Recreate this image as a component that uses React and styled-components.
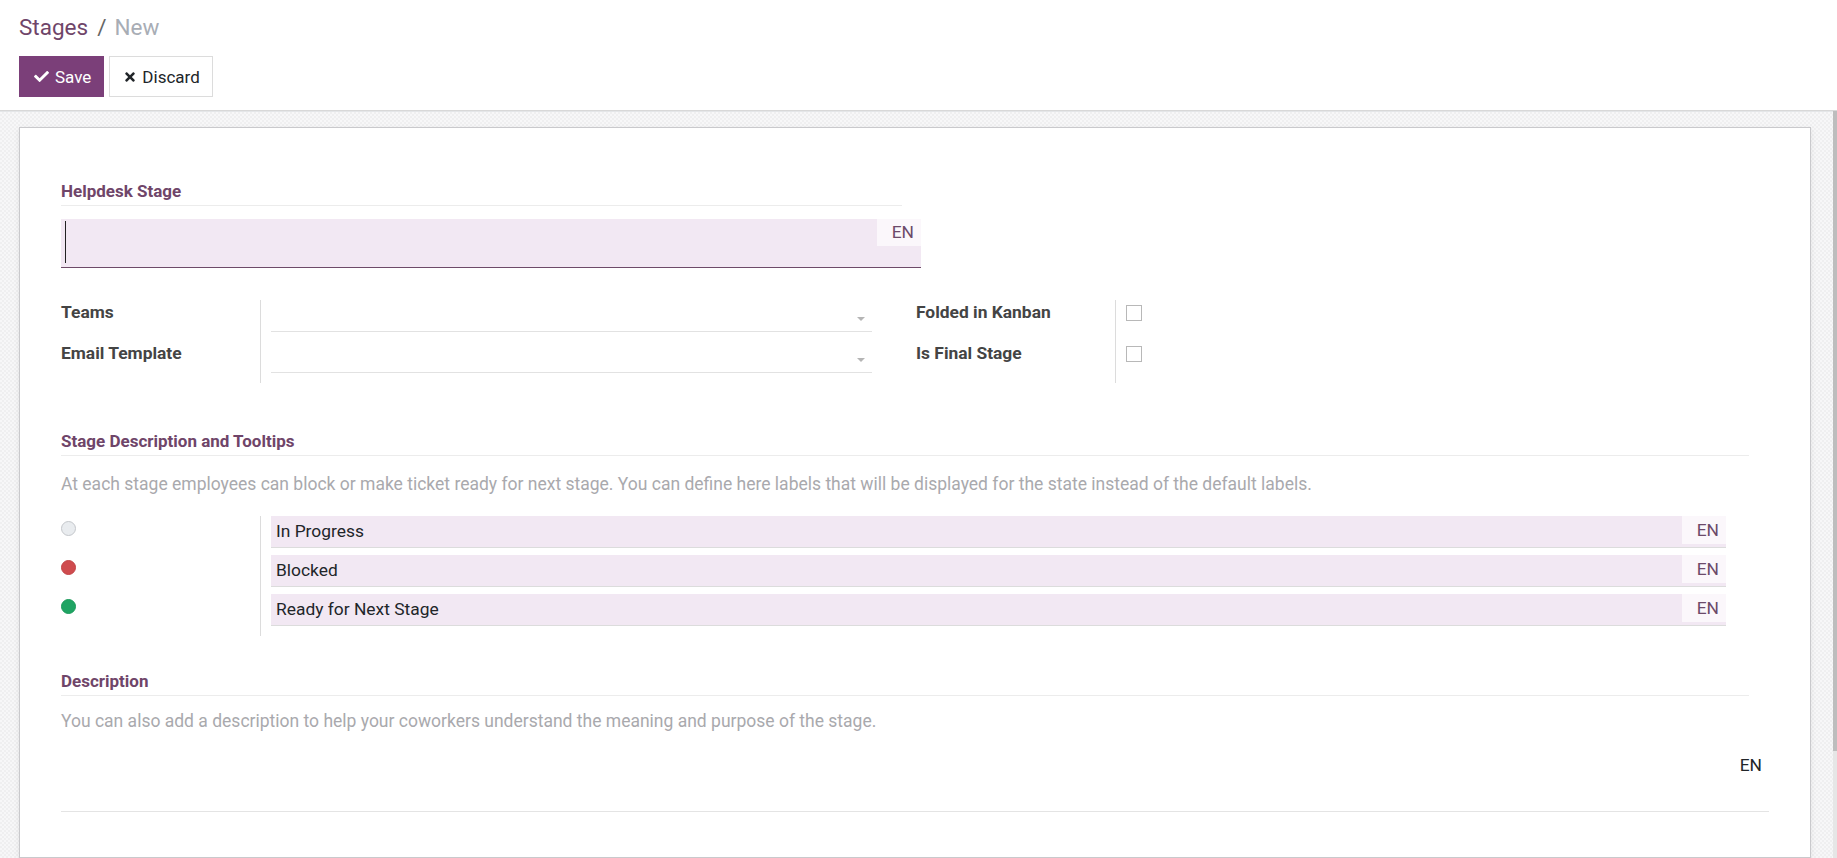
import styled, { createGlobalStyle } from "styled-components"
import { FaCheck, FaTimes } from "react-icons/fa"

const legend = [
  { color: "#e9ecef", border: "#c4c7cb", label: "In Progress" },
  { color: "#cf4b4e", border: "#c24346", label: "Blocked" },
  { color: "#1fa463", border: "#1a9a5a", label: "Ready for Next Stage" },
]

export default function App() {
  return (
    <>
      <GlobalStyle />
      <ControlPanel>
        <Breadcrumb>
          <Crumb>Stages</Crumb>
          <Slash>/</Slash>
          <Current>New</Current>
        </Breadcrumb>
        <Buttons>
          <PrimaryButton>
            <FaCheck size={15} />
            Save
          </PrimaryButton>
          <SecondaryButton>
            <FaTimes size={14} />
            Discard
          </SecondaryButton>
        </Buttons>
      </ControlPanel>
      <Content>
        <Sheet>
          <TitleBlock>
            <SectionLabel width="841px">Helpdesk Stage</SectionLabel>
            <NameInput>
              <Caret />
              <LangTag>EN</LangTag>
            </NameInput>
          </TitleBlock>

          <Group>
            <InnerGroup columns="199px 612px" width="855px">
              <FieldLabel>Teams</FieldLabel>
              <FieldCell>
                <Many2One>
                  <DropCaret />
                </Many2One>
              </FieldCell>
              <FieldLabel>Email Template</FieldLabel>
              <FieldCell last>
                <Many2One>
                  <DropCaret />
                </Many2One>
              </FieldCell>
            </InnerGroup>
            <InnerGroup columns="199px 200px">
              <FieldLabel>Folded in Kanban</FieldLabel>
              <FieldCell>
                <CheckRow>
                  <Checkbox />
                </CheckRow>
              </FieldCell>
              <FieldLabel>Is Final Stage</FieldLabel>
              <FieldCell last>
                <CheckRow>
                  <Checkbox />
                </CheckRow>
              </FieldCell>
            </InnerGroup>
          </Group>

          <SectionLabel width="1688px" top="47px">
            Stage Description and Tooltips
          </SectionLabel>
          <Help>
            At each stage employees can block or make ticket ready for next stage. You can define here labels that will
            be displayed for the state instead of the default labels.
          </Help>
          <LegendGroup>
            {legend.map((item, index) => (
              <LegendRow key={item.label}>
                <LegendCell>
                  <Dot color={item.color} border={item.border} />
                </LegendCell>
                <FieldCell last={index === legend.length - 1} tight>
                  <StateInput>
                    <StateText>{item.label}</StateText>
                    <LangTag small>EN</LangTag>
                  </StateInput>
                </FieldCell>
              </LegendRow>
            ))}
          </LegendGroup>

          <SectionLabel width="1688px" top="34px">
            Description
          </SectionLabel>
          <Help top="14px">
            You can also add a description to help your coworkers understand the meaning and purpose of the stage.
          </Help>
          <Editor>
            <EditorLang>EN</EditorLang>
          </Editor>
        </Sheet>
        <ScrollTrack>
          <ScrollThumb />
        </ScrollTrack>
      </Content>
    </>
  )
}

const GlobalStyle = createGlobalStyle`
  html, body {
    margin: 0;
    padding: 0;
  }
  body {
    font-family: Roboto, "Noto Sans", sans-serif;
    font-size: 17.4px;
    line-height: 1.5;
    color: #4c4c4c;
    background: #fff;
    overflow: hidden;
    height: 858px;
  }
`
const ControlPanel = styled.div`
  padding: 13px 19px 13px;
  border-bottom: 1px solid #d8d8d8;
  background: #fff;
`
const Breadcrumb = styled.div`
  display: flex;
  align-items: center;
  height: 28px;
  font-size: 22.5px;
  line-height: 28px;
`
const Crumb = styled.span`
  color: #6f4569;
`
const Slash = styled.span`
  color: #666;
  margin: 0 8px 0 9px;
`
const Current = styled.span`
  color: #a8adb5;
`
const Buttons = styled.div`
  display: flex;
  gap: 5px;
  margin-top: 15px;
`
const Button = styled.button`
  display: flex;
  align-items: center;
  height: 41px;
  font-family: Roboto, sans-serif;
  font-size: 17px;
  border-radius: 0;
  cursor: pointer;
`
const PrimaryButton = styled(Button)`
  gap: 6px;
  padding: 0 12px 0 14px;
  background: #7b3f79;
  border: 1px solid #7b3f79;
  color: #fff;
`
const SecondaryButton = styled(Button)`
  gap: 5px;
  padding: 0 12px 0 13px;
  background: #fff;
  border: 1px solid #dcdcdc;
  color: #212529;
`
const Content = styled.div`
  display: flex;
  align-items: flex-start;
  height: 747px;
  padding: 15px 0 0 19px;
  box-sizing: border-box;
  border-top: 1px solid #e4e6e8;
  background-color: #f3f3f4;
  background-image: repeating-conic-gradient(#efeff0 0 25%, #f7f7f8 0 50%);
  background-size: 4px 4px;
`
const Sheet = styled.div`
  flex: 1;
  margin-right: 22px;
  padding: 52px 41px 45px;
  background: #fff;
  border: 1px solid #c9c9cc;
  box-shadow: 0 2px 6px rgba(0, 0, 0, 0.08);
`
const ScrollTrack = styled.div`
  width: 4px;
  height: 747px;
  margin-top: -16px;
  background: #e6e6e6;
`
const ScrollThumb = styled.div`
  height: 640px;
  background: #bdbdbd;
`
const TitleBlock = styled.div`
  width: 860px;
`
const SectionLabel = styled.div`
  width: ${({ width }) => width};
  margin-top: ${({ top }) => top || 0};
  padding-bottom: 2px;
  border-bottom: 1px solid #ececec;
  color: #6f4569;
  font-weight: 700;
  font-size: 17px;
  line-height: 23px;
`
const NameInput = styled.div`
  display: flex;
  align-items: flex-start;
  height: 48px;
  margin-top: 13px;
  background: #f2e8f3;
  border-bottom: 1px solid #6e4a68;
`
const Caret = styled.span`
  flex: 1;
  height: 42px;
  margin: 2px 0 0 4px;
  border-left: 1px solid #222;
`
const LangTag = styled.span`
  display: flex;
  align-items: center;
  justify-content: flex-end;
  width: 44px;
  height: ${({ small }) => (small ? "28px" : "27px")};
  padding-right: 7px;
  box-sizing: border-box;
  background: #fbf7fb;
  color: #6c4a6a;
  font-size: 17.4px;
`
const Group = styled.div`
  display: flex;
  margin-top: 32px;
`
const InnerGroup = styled.div`
  display: grid;
  grid-template-columns: ${({ columns }) => columns};
  width: ${({ width }) => width || "auto"};
`
const FieldLabel = styled.div`
  color: #444;
  font-weight: 700;
  line-height: 23px;
  padding-top: 1px;
`
const FieldCell = styled.div`
  padding: 0 0 ${({ last, tight }) => (last ? "10px" : tight ? "7px" : "9px")} 10px;
  border-left: 1px solid #dcdcdc;
`
const Many2One = styled.div`
  display: flex;
  justify-content: flex-end;
  width: 601px;
  height: 31px;
  border-bottom: 1px solid #e2e2e2;
`
const DropCaret = styled.span`
  width: 0;
  height: 0;
  margin: 17px 7px 0 0;
  border-left: 4px solid transparent;
  border-right: 4px solid transparent;
  border-top: 4px solid #b5b5b5;
`
const CheckRow = styled.div`
  height: 32px;
  padding-top: 5px;
  box-sizing: border-box;
`
const Checkbox = styled.span`
  display: block;
  width: 14px;
  height: 14px;
  border: 1px solid #b8b8b8;
  background: #fff;
`
const Help = styled.p`
  margin: ${({ top }) => top || "17px"} 0 0;
  color: #a9a9ad;
  font-size: 17.5px;
  line-height: 23px;
`
const LegendGroup = styled.div`
  width: 1688px;
  margin-top: 20px;
`
const LegendRow = styled.div`
  display: grid;
  grid-template-columns: 199px 1fr;
`
const LegendCell = styled.div`
  padding-top: 5px;
`
const Dot = styled.span`
  display: block;
  width: 13px;
  height: 13px;
  border-radius: 50%;
  background: ${({ color }) => color};
  border: 1px solid ${({ border }) => border};
`
const StateInput = styled.div`
  display: flex;
  align-items: flex-start;
  width: 1455px;
  height: 31px;
  background: #f2e8f3;
  border-bottom: 1px solid #dcdcdc;
`
const StateText = styled.span`
  flex: 1;
  padding: 4px 0 0 5px;
  color: #212529;
  line-height: 23px;
`
const Editor = styled.div`
  display: flex;
  justify-content: flex-end;
  height: 79px;
  padding: 20px 5px 0 0;
  box-sizing: border-box;
  border-bottom: 1px solid #e4e4e4;
`
const EditorLang = styled.span`
  height: 25px;
  padding: 0 2px;
  background: #fff;
  color: #212529;
  line-height: 25px;
`
